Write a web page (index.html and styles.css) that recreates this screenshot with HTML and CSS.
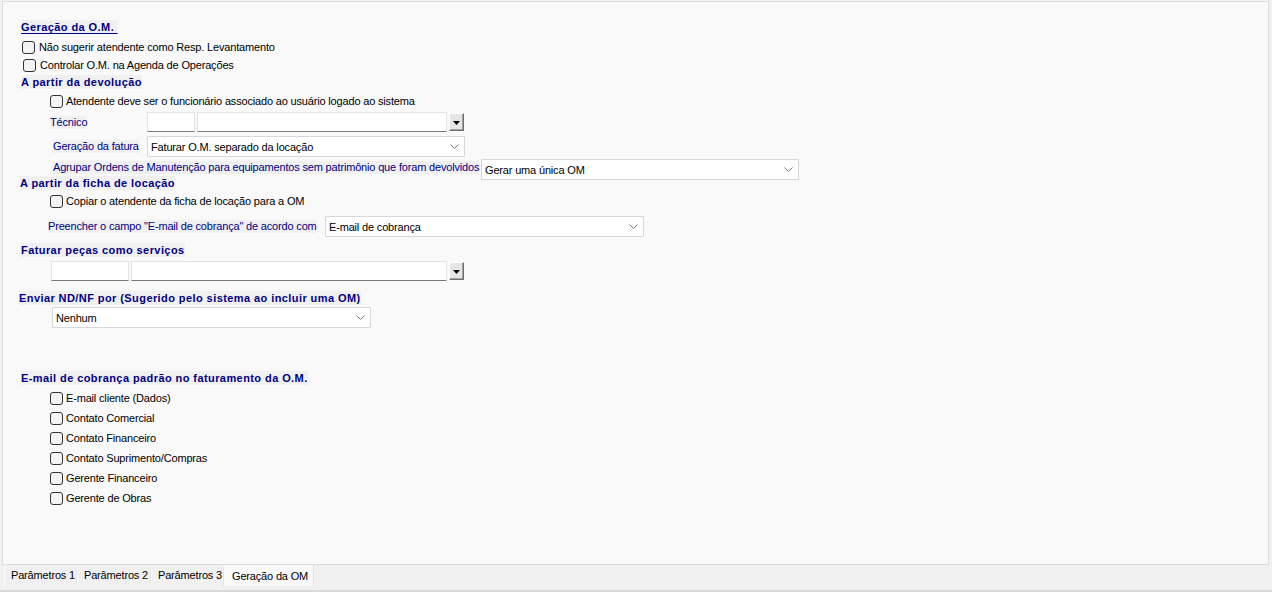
FILE: index.html
```html
<!DOCTYPE html>
<html lang="pt-BR">
<head>
<meta charset="utf-8">
<title>Geração da OM</title>
<link rel="stylesheet" href="styles.css">
</head>
<body>
<div class="window">
  <div class="panel">
    <div class="row head h1"><span class="hbox ul">Geração da O.M.&nbsp;</span></div>
    <div class="row cbrow r-cb1"><span class="cb"></span><span class="cblabel">Não sugerir atendente como Resp. Levantamento</span></div>
    <div class="row cbrow r-cb2"><span class="cb"></span><span class="cblabel">Controlar O.M. na Agenda de Operações</span></div>
    <div class="row head h2"><span class="hbox">A partir da devolução</span></div>
    <div class="row cbrow r-cb3"><span class="cb"></span><span class="cblabel">Atendente deve ser o funcionário associado ao usuário logado ao sistema</span></div>
    <div class="row field r-tec">
      <div class="lab w-tec"><span class="lbl">Técnico</span></div>
      <div class="inp w48"></div>
      <div class="inp w250"></div>
      <div class="ddbtn"><svg width="7" height="4" viewBox="0 0 7 4"><path d="M0 0h7L3.5 4z" fill="#000"/></svg></div>
    </div>
    <div class="row field r-fat">
      <div class="lab w-fat"><span class="lbl">Geração da fatura</span></div>
      <div class="sel w318"><span>Faturar O.M. separado da locação</span><svg class="chev" width="9" height="5" viewBox="0 0 9 5"><path d="M0.5 0.5L4.5 4.5L8.5 0.5" fill="none" stroke="#7a7a7a" stroke-width="1"/></svg></div>
    </div>
    <div class="row field r-agr">
      <div class="lab w-agr"><span class="lbl">Agrupar Ordens de Manutenção para equipamentos sem patrimônio que foram devolvidos</span></div>
      <div class="sel w318"><span>Gerar uma única OM</span><svg class="chev" width="9" height="5" viewBox="0 0 9 5"><path d="M0.5 0.5L4.5 4.5L8.5 0.5" fill="none" stroke="#7a7a7a" stroke-width="1"/></svg></div>
    </div>
    <div class="row head h3"><span class="hbox">A partir da ficha de locação</span></div>
    <div class="row cbrow r-cb4"><span class="cb"></span><span class="cblabel">Copiar o atendente da ficha de locação para a OM</span></div>
    <div class="row field r-pre">
      <div class="lab w-pre"><span class="lbl">Preencher o campo "E-mail de cobrança" de acordo com</span></div>
      <div class="sel w319"><span>E-mail de cobrança</span><svg class="chev" width="9" height="5" viewBox="0 0 9 5"><path d="M0.5 0.5L4.5 4.5L8.5 0.5" fill="none" stroke="#7a7a7a" stroke-width="1"/></svg></div>
    </div>
    <div class="row head h4"><span class="hbox">Faturar peças como serviços</span></div>
    <div class="row field r-pec">
      <div class="inp w78"></div>
      <div class="inp w316"></div>
      <div class="ddbtn"><svg width="7" height="4" viewBox="0 0 7 4"><path d="M0 0h7L3.5 4z" fill="#000"/></svg></div>
    </div>
    <div class="row head h5"><span class="hbox">Enviar ND/NF por (Sugerido pelo sistema ao incluir uma OM)</span></div>
    <div class="row field r-env">
      <div class="sel w319"><span>Nenhum</span><svg class="chev" width="9" height="5" viewBox="0 0 9 5"><path d="M0.5 0.5L4.5 4.5L8.5 0.5" fill="none" stroke="#7a7a7a" stroke-width="1"/></svg></div>
    </div>
    <div class="row head h6"><span class="hbox">E-mail de cobrança padrão no faturamento da O.M.</span></div>
    <div class="row cbrow r-em"><span class="cb"></span><span class="cblabel">E-mail cliente (Dados)</span></div>
    <div class="row cbrow r-em"><span class="cb"></span><span class="cblabel">Contato Comercial</span></div>
    <div class="row cbrow r-em"><span class="cb"></span><span class="cblabel">Contato Financeiro</span></div>
    <div class="row cbrow r-em"><span class="cb"></span><span class="cblabel">Contato Suprimento/Compras</span></div>
    <div class="row cbrow r-em"><span class="cb"></span><span class="cblabel">Gerente Financeiro</span></div>
    <div class="row cbrow r-em"><span class="cb"></span><span class="cblabel">Gerente de Obras</span></div>
  </div>
  <div class="tabs">
    <div class="tab t1">Parâmetros 1</div>
    <div class="tab t2">Parâmetros 2</div>
    <div class="tab t3">Parâmetros 3</div>
    <div class="tab active">Geração da OM</div>
  </div>
  <div class="bottomline"></div>
</div>
</body>
</html>
```
FILE: styles.css
```css
* { box-sizing: border-box; }
html, body { margin: 0; padding: 0; }
body {
  font-family: "Liberation Sans", Arial, sans-serif;
  font-size: 11px;
  letter-spacing: -0.17px;
  color: #000;
  background: #f0f0f0;
}
.window {
  width: 1272px;
  height: 592px;
  background: #f0f0f0;
  overflow: hidden;
  position: relative;
}
.panel {
  margin: 1px 0 0 2px;
  width: 1267px;
  height: 564px;
  background: #f9f9f9;
  border: 1px solid #dcdcdc;
  display: flex;
  flex-direction: column;
}
.row { display: flex; align-items: center; flex: 0 0 auto; }

/* headings */
.head { height: 14px; }
.hbox {
  font-weight: bold;
  color: #000080;
  background: #f0f0f0;
  line-height: 14px;
  letter-spacing: 0.42px;
  white-space: nowrap;
}
.ul { text-decoration: underline; text-underline-offset: 2px; }
.h1 { margin-top: 18px; padding-left: 18px; }
.h2 { margin-top: 3px; padding-left: 18px; }
.h3 { margin-top: -4px; padding-left: 17px; }
.h4 { margin-top: 6px; padding-left: 18px; }
.h5 { margin-top: 10px; padding-left: 16px; }
.h6 { margin-top: 43px; padding-left: 18px; }

/* checkboxes */
.cbrow { height: 13px; }
.cb {
  width: 13px;
  height: 13px;
  border: 1px solid #333;
  border-radius: 3px;
  background: #f3f3f3;
  flex: 0 0 auto;
}
.cblabel { margin-left: 4px; white-space: nowrap; line-height: 13px; }
.r-cb1 { margin-top: 7px; padding-left: 19px; }
.r-cb2 { margin-top: 5px; padding-left: 20px; }
.r-cb3 { margin-top: 6px; padding-left: 47px; }
.r-cb4 { margin-top: 5px; padding-left: 47px; }
.r-em { margin-top: 7px; padding-left: 47px; }
.r-em .cblabel, .r-cb3 .cblabel, .r-cb4 .cblabel { margin-left: 3px; }

/* field rows */
.lab { flex: 0 0 auto; white-space: nowrap; }
.lbl { color: #000080; background: #f0f0f0; line-height: 13px; display: inline-block; }
.w-tec { width: 97px; }
.w-fat { width: 94px; }
.w-agr { width: 428px; }
.w-pre { width: 277px; }
.r-tec { margin-top: 4px; padding-left: 47px; height: 20px; }
.r-fat { margin-top: 4px; padding-left: 50px; height: 21px; }
.r-agr { margin-top: 2px; padding-left: 50px; height: 21px; }
.r-agr .lab { align-self: flex-start; padding-top: 2px; }
.r-pre { margin-top: 8px; padding-left: 45px; height: 21px; }
.r-pec { margin-top: 4px; padding-left: 48px; height: 20px; }
.r-env { margin-top: 2px; padding-left: 49px; height: 21px; }

.inp {
  height: 20px;
  background: #fff;
  border: 1px solid #e3e3e3;
  border-bottom-color: #7a7a7a;
  margin-right: 2px;
  flex: 0 0 auto;
}
.w48 { width: 48px; }
.w250 { width: 250px; }
.w78 { width: 78px; }
.w316 { width: 316px; }
.ddbtn {
  width: 15px;
  height: 18px;
  background: #e6e6e6;
  border: 1px solid;
  border-color: #fff #6f6f6f #6f6f6f #fff;
  box-shadow: inset -1px -1px 0 #a0a0a0;
  display: flex;
  align-items: center;
  justify-content: center;
  flex: 0 0 auto;
}
.ddbtn svg { display: block; margin-top: 1px; }

.sel {
  height: 21px;
  background: #fff;
  border: 1px solid #d7d7d7;
  border-radius: 1px;
  display: flex;
  align-items: center;
  padding-left: 3px;
  position: relative;
  flex: 0 0 auto;
  white-space: nowrap;
}
.w318 { width: 318px; }
.w319 { width: 319px; }
.chev { position: absolute; right: 5px; top: 7px; }

/* tabs */
.tabs {
  display: flex;
  align-items: flex-start;
  padding-left: 4px;
  height: 21px;
}
.tab {
  height: 19px;
  margin-top: 2px;
  line-height: 17px;
  padding-left: 6px;
  background: #f0f0f0;
  border-left: 1px solid #fcfcfc;
  border-right: 1px solid #e4e4e4;
  white-space: nowrap;
  flex: 0 0 auto;
}
.t1 { width: 73px; }
.t2 { width: 74px; }
.t3 { width: 73px; }
.tab.active {
  margin-top: 0;
  height: 21px;
  line-height: 23px;
  width: 90px;
  background: #f9f9f9;
  padding-left: 7px;
  border-left: 1px solid #f9f9f9;
  border-right: 1px solid #e0e0e0;
}
.bottomline {
  margin-top: 4px;
  height: 2px;
  background: #d9d9d9;
}
```
